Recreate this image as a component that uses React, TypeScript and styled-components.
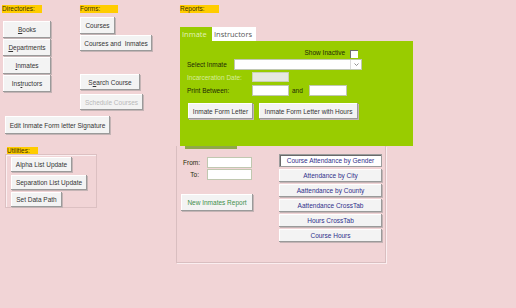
import React from "react";
import styled, { createGlobalStyle } from "styled-components";

const Global = createGlobalStyle`
  html, body { margin: 0; padding: 0; background: #f1d4d6; }
  * { box-sizing: border-box; }
`;

const S = {
  Page: styled.div`
    width: 516px;
    height: 308px;
    background: #f1d4d6;
    display: flex;
    padding: 5px 0 0 2px;
    font-family: "Liberation Sans", Arial, sans-serif;
    font-size: 6.5px;
    color: #333;
    overflow: hidden;
  `,
  Left: styled.div`
    width: 174px;
    display: flex;
    flex-direction: column;
  `,
  Top: styled.div`
    display: flex;
  `,
  Col: styled.div<{ $w?: number }>`
    display: flex;
    flex-direction: column;
    align-items: flex-start;
    width: ${(p) => (p.$w ? `${p.$w}px` : "auto")};
  `,
  Label: styled.div<{ $w: number; $ml?: number; $mt?: number; $u?: boolean }>`
    width: ${(p) => p.$w}px;
    height: 8px;
    line-height: 8px;
    margin-left: ${(p) => p.$ml ?? 0}px;
    margin-top: ${(p) => p.$mt ?? 0}px;
    background: #ffcc00;
    color: #3a3000;
    font-size: 6.5px;
    text-decoration: ${(p) => (p.$u ? "underline" : "none")};
    white-space: nowrap;
  `,
  Btn: styled.button<{ $w: number; $h?: number; $mt?: number; $ml?: number; $dis?: boolean; $c?: string }>`
    flex: none;
    width: ${(p) => p.$w}px;
    height: ${(p) => p.$h ?? 17}px;
    margin-top: ${(p) => p.$mt ?? 0}px;
    margin-left: ${(p) => p.$ml ?? 0}px;
    padding: 0;
    border: none;
    background: #f3f3f3;
    box-shadow: inset -1px -1px 0 #9a9a9a, inset 1px 1px 0 #ffffff, 1px 1px 0 #c4b4b5;
    font-family: "Liberation Sans", Arial, sans-serif;
    font-size: 6.5px;
    color: ${(p) => (p.$dis ? "#b9b9b9" : p.$c ?? "#333")};
    white-space: nowrap;
    cursor: default;
  `,
  Stack: styled.div<{ $gap: number; $mt: number; $ml?: number }>`
    display: flex;
    flex-direction: column;
    align-items: flex-start;
    gap: ${(p) => p.$gap}px;
    margin-top: ${(p) => p.$mt}px;
    margin-left: ${(p) => p.$ml ?? 0}px;
  `,
  UtilBox: styled.div`
    width: 92px;
    height: 54px;
    margin-left: 3px;
    margin-top: -1px;
    border: 1px solid #dcc0c2;
    box-shadow: inset 1px 1px 0 #fbeef0;
    padding: 2px 0 0 5px;
    display: flex;
    flex-direction: column;
    align-items: flex-start;
  `,
  Right: styled.div`
    width: 240px;
    display: flex;
    flex-direction: column;
    align-items: flex-start;
  `,
  Tabs: styled.div`
    display: flex;
    margin-top: 14px;
    margin-left: 4px;
    height: 14px;
  `,
  Tab: styled.div<{ $on?: boolean; $w: number }>`
    width: ${(p) => p.$w}px;
    height: 14px;
    line-height: 14px;
    padding-left: 2px;
    font-family: "Open Sans", "Liberation Sans", sans-serif;
    font-size: 7.5px;
    background: ${(p) => (p.$on ? "#99cc00" : "#ffffff")};
    color: ${(p) => (p.$on ? "#e2f2b8" : "#555")};
  `,
  Green: styled.div`
    width: 233px;
    height: 105px;
    margin-left: 4px;
    background: #99cc00;
    padding: 6px 0 0 7px;
    display: flex;
    flex-direction: column;
  `,
  Row: styled.div<{ $mt?: number; $h: number; $end?: boolean }>`
    display: flex;
    align-items: center;
    height: ${(p) => p.$h}px;
    margin-top: ${(p) => p.$mt ?? 0}px;
    justify-content: ${(p) => (p.$end ? "flex-end" : "flex-start")};
    padding-right: ${(p) => (p.$end ? "55px" : "0")};
  `,
  FLabel: styled.span<{ $w?: number; $pale?: boolean; $right?: boolean; $pl?: number }>`
    width: ${(p) => (p.$w ? `${p.$w}px` : "auto")};
    flex: none;
    padding-left: ${(p) => p.$pl ?? 0}px;
    color: ${(p) => (p.$pale ? "#d6ec9c" : "#1e2a06")};
    text-align: ${(p) => (p.$right ? "right" : "left")};
    white-space: nowrap;
  `,
  Check: styled.span`
    width: 8px;
    height: 8px;
    margin-left: 5px;
    margin-top: 3px;
    background: #fff;
    box-shadow: inset 1px 1px 0 #6f6f6f;
  `,
  Field: styled.span<{ $w: number; $h: number; $gray?: boolean; $ml?: number }>`
    flex: none;
    width: ${(p) => p.$w}px;
    height: ${(p) => p.$h}px;
    margin-left: ${(p) => p.$ml ?? 0}px;
    background: ${(p) => (p.$gray ? "#e6e8e0" : "#ffffff")};
    border: 1px solid ${(p) => (p.$gray ? "#c9d2b4" : "#c0c8b0")};
  `,
  Combo: styled.span`
    display: flex;
    justify-content: flex-end;
    width: 128px;
    height: 11px;
    background: #fff;
    border: 1px solid #c0c8b0;
  `,
  Drop: styled.span`
    width: 11px;
    height: 100%;
    border-left: 1px solid #dcdcdc;
    display: flex;
    align-items: center;
    justify-content: center;
  `,
  BtnRow: styled.div`
    display: flex;
    gap: 6px;
    margin-top: 7px;
    margin-left: 1px;
  `,
  Strip: styled.div`
    width: 52px;
    height: 3px;
    margin-left: 8px;
    background: #8fa84a;
  `,
  Lower: styled.div`
    width: 210px;
    height: 117px;
    border: 1px solid #d9bec0;
    border-top: none;
    box-shadow: 1px 1px 0 #fbeef0;
    display: flex;
    flex-direction: column;
  `,
  LowerBody: styled.div`
    display: flex;
  `,
  LowerLeft: styled.div`
    width: 99px;
    margin-left: 3px;
    margin-top: 8px;
    display: flex;
    flex-direction: column;
    align-items: flex-start;
  `,
  Reports: styled.div`
    display: flex;
    flex-direction: column;
    gap: 2px;
    margin-top: 5px;
  `,
  DefaultBtn: styled.button`
    width: 103px;
    height: 13px;
    padding: 0;
    background: #ffffff;
    border: 1px solid #9c9c9c;
    box-shadow: inset 1px 1px 0 #6a6a6a;
    font-family: "Liberation Sans", Arial, sans-serif;
    font-size: 6.5px;
    color: #2f2f8a;
    cursor: default;
  `,
};

const dirs: [string, number][] = [
  ["Books", 0],
  ["Departments", 0],
  ["Inmates", 0],
  ["Instructors", 3],
];

const Accel = ({ text, at }: { text: string; at: number }) => (
  <>
    {text.slice(0, at)}
    <u>{text[at]}</u>
    {text.slice(at + 1)}
  </>
);

const reports = [
  "Attendance by City",
  "Aattendance by County",
  "Aattendance CrossTab",
  "Hours CrossTab",
  "Course Hours",
];

export default function App() {
  return (
    <>
      <Global />
      <S.Page>
        <S.Left>
          <S.Top>
            <S.Col $w={78}>
              <S.Label $w={40}>Directories:</S.Label>
              <S.Stack $gap={1} $mt={8} $ml={1}>
                {dirs.map(([d, at]) => (
                  <S.Btn key={d} $w={48}>
                    <Accel text={d} at={at} />
                  </S.Btn>
                ))}
              </S.Stack>
            </S.Col>
            <S.Col>
              <S.Label $w={38}>Forms:</S.Label>
              <S.Btn $w={35} $mt={4}>Courses</S.Btn>
              <S.Btn $w={72} $h={16} $mt={1}>Courses and&nbsp; Inmates</S.Btn>
              <S.Btn $w={60} $h={16} $mt={23}>
                <Accel text="Search Course" at={1} />
              </S.Btn>
              <S.Btn $w={63} $h={16} $mt={4} $dis>
                Schedule Courses
              </S.Btn>
            </S.Col>
          </S.Top>
          <S.Btn $w={105} $h={18} $mt={6} $ml={3}>
            Edit Inmate Form letter Signature
          </S.Btn>
          <S.Label $w={31} $ml={5} $mt={13} $u>
            Utilities:
          </S.Label>
          <S.UtilBox>
            <S.Btn $w={61} $h={15}>Alpha List Update</S.Btn>
            <S.Btn $w={76} $h={15} $mt={3}>Separation List Update</S.Btn>
            <S.Btn $w={51} $h={15} $mt={2}>Set Data Path</S.Btn>
          </S.UtilBox>
        </S.Left>
        <S.Right>
          <S.Label $w={39} $ml={4}>Reports:</S.Label>
          <S.Tabs>
            <S.Tab $on $w={32}>Inmate</S.Tab>
            <S.Tab $w={44}>Instructors</S.Tab>
          </S.Tabs>
          <S.Green>
            <S.Row $h={11} $end>
              <S.FLabel>Show Inactive</S.FLabel>
              <S.Check />
            </S.Row>
            <S.Row $h={11} $mt={1}>
              <S.FLabel $w={47}>Select Inmate</S.FLabel>
              <S.Combo>
                <S.Drop>
                  <svg width="5" height="3" viewBox="0 0 5 3">
                    <path d="M0.5 0.5 L2.5 2.5 L4.5 0.5" fill="none" stroke="#777" strokeWidth="0.8" />
                  </svg>
                </S.Drop>
              </S.Combo>
            </S.Row>
            <S.Row $h={10} $mt={2}>
              <S.FLabel $w={65} $pale>Incarceration Date:</S.FLabel>
              <S.Field $w={37} $h={10} $gray />
            </S.Row>
            <S.Row $h={11} $mt={3}>
              <S.FLabel $w={65}>Print Between:</S.FLabel>
              <S.Field $w={37} $h={11} />
              <S.FLabel $w={20} $pl={3}>and</S.FLabel>
              <S.Field $w={38} $h={11} />
            </S.Row>
            <S.BtnRow>
              <S.Btn $w={65} $h={16}>Inmate Form Letter</S.Btn>
              <S.Btn $w={99} $h={16}>Inmate Form Letter with Hours</S.Btn>
            </S.BtnRow>
          </S.Green>
          <S.Lower>
            <S.Strip />
            <S.LowerBody>
              <S.LowerLeft>
                <S.Row $h={11}>
                  <S.FLabel $w={20} $right>From:</S.FLabel>
                  <S.Field $w={45} $h={11} $ml={7} />
                </S.Row>
                <S.Row $h={11} $mt={1}>
                  <S.FLabel $w={19} $right>To:</S.FLabel>
                  <S.Field $w={45} $h={11} $ml={8} />
                </S.Row>
                <S.Btn $w={72} $h={17} $mt={14} $ml={1} $c="#3f8f4a">
                  New Inmates Report
                </S.Btn>
              </S.LowerLeft>
              <S.Reports>
                <S.DefaultBtn>Course Attendance by Gender</S.DefaultBtn>
                {reports.map((r) => (
                  <S.Btn key={r} $w={103} $h={13} $c="#2f2f8a">
                    {r}
                  </S.Btn>
                ))}
              </S.Reports>
            </S.LowerBody>
          </S.Lower>
        </S.Right>
      </S.Page>
    </>
  );
}
